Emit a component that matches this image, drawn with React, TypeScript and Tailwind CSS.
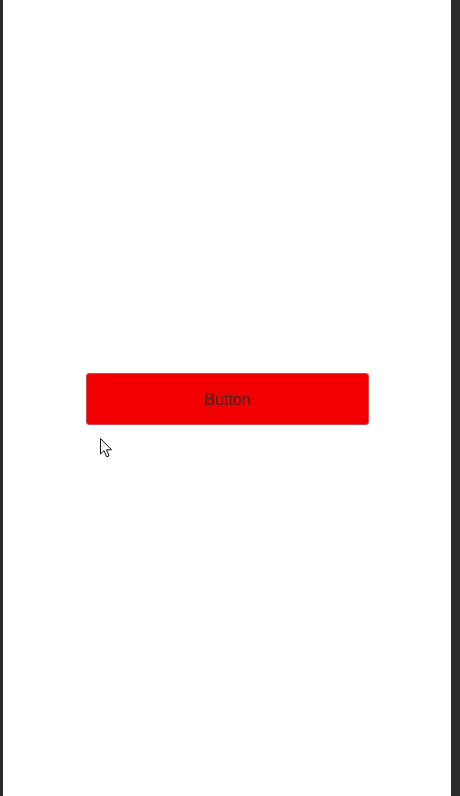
import React from 'react';

function Cursor() {
  return (
    <svg
      className="absolute left-[100px] top-[438px]"
      width="13"
      height="20"
      viewBox="0 0 13 20"
    >
      <path
        d="M0.5 0.5 L0.5 16 L4 12.6 L6.6 18.8 L9 17.8 L6.5 11.8 L11.5 11.8 Z"
        fill="#fff"
        stroke="#111"
        strokeWidth="1"
        strokeLinejoin="miter"
      />
    </svg>
  );
}

export default function App() {
  return (
    <div className="relative flex h-[796px] w-[460px] bg-white">
      {/* device frame edges */}
      <div className="w-[3px] bg-[#2b2b2b]" />
      <main className="flex flex-1 items-center justify-center pt-[2px]">
        <button className="h-[52px] w-[283px] rounded-[3px] border border-[#c84a4a] bg-[#f20000] pt-[2px] text-[16px] text-[#4d2020] font-['Liberation_Sans',Arial,sans-serif]">
          Button
        </button>
      </main>
      <div className="w-[9px] bg-[#2b2b2b]" />
      <Cursor />
    </div>
  );
}
